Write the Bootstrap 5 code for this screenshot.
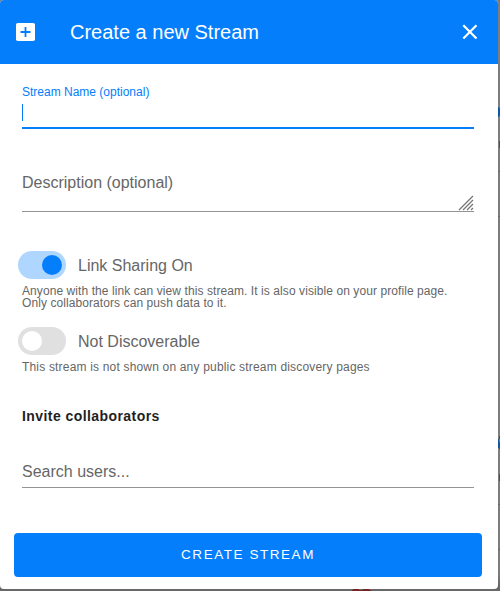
<!DOCTYPE html>
<html lang="en">
<head>
<meta charset="utf-8">
<meta name="viewport" content="width=device-width, initial-scale=1">
<title>Create a new Stream</title>
<link href="https://cdn.jsdelivr.net/npm/bootstrap@5.3.0/dist/css/bootstrap.min.css" rel="stylesheet">
<style>
:root{--blue:#047efb;--ink:#666}
body{font-family:"Liberation Sans",Arial,sans-serif;background:linear-gradient(#7d7d7d 97%,#686868 99%);color:var(--ink);height:591px;overflow:hidden;line-height:1}
.dialog{width:498px;height:589px;border-radius:4px}
.dialog-head{height:64px;background:var(--blue);padding:0 18px 0 13px}
.dialog-title{font-size:20px;margin-left:32px;line-height:24px}
.dialog-body{padding:0 24px 0 22px}
.name-field{height:65px;padding-top:22px;border-bottom:2px solid var(--blue)}
.name-field label{font-size:12px;line-height:12px;color:var(--blue)}
.caret{width:1px;height:17px;background:var(--blue);margin-top:6px}
.line-field{font-size:16px;border-bottom:1px solid #949494}
.desc-field{height:83px;padding-bottom:20px;margin-bottom:39px}
.search-field{height:64px;padding-bottom:7px}
.grip{right:0;bottom:0}
.toggle-row{height:28px;margin-left:-4px;font-size:16px}
.toggle-label{padding-top:2px}
.track{width:48px;height:28px;border-radius:14px;background:#e0e0e0;padding:0 4px;margin-right:12px}
.track.on{background:#afd6fe}
.knob{width:20px;height:20px;border-radius:50%;background:#fff}
.on .knob{background:var(--blue)}
.hint{font-size:12px;line-height:12px;letter-spacing:.18px;margin:6px 0 0}
.hint span{display:block;white-space:nowrap;letter-spacing:.08px}
.hint + .toggle-row{margin-top:18px}
.invite{font-size:14px;letter-spacing:.43px;color:#1f1f1f;line-height:16px;margin-top:35px}
.create{height:44px;margin:45px 16px 0 14px;background:var(--blue);border-radius:4px;font-size:13.5px;letter-spacing:1.55px;--bs-btn-hover-bg:#047efb}
.page-edge{left:0;top:0}
</style>
</head>
<body>
<svg class="page-edge position-absolute" width="500" height="591" viewBox="0 0 500 591">
  <path d="M498 171h2v1h-2zM498 216h2v1h-2zM498 504h2v1h-2zM498 549h2v1h-2z" fill="#686868"/>
  <path d="M498 107h1v1h1v8h-1v1h-1zM499 436h1v3h-1zM498 439h1v9h-1zM499 442h1v7h-1z" fill="#1755a0"/>
  <path d="M499 141h1v7h-1zM499 474h1v7h-1z" fill="#70452f"/>
  <path d="M353 589h6v1h4v-1h6v1h2v1h-19v-1h1z" fill="#782424"/>
</svg>
<main class="dialog bg-white d-flex flex-column overflow-hidden position-relative">
  <header class="dialog-head d-flex align-items-center text-white">
    <svg width="25" height="24" viewBox="0 0 25 24"><rect x="3" y="3" width="19" height="18" rx="1.8" fill="#fff"/><path d="M12.5 7v10M7.5 12h10" stroke="#047efb" stroke-width="1.8"/></svg>
    <h1 class="dialog-title fw-normal mb-0">Create a new Stream</h1>
    <svg class="ms-auto" width="20" height="20" viewBox="0 0 20 20" stroke="currentColor" stroke-width="2.2" fill="none"><path d="M3.3 3.3l13.2 13.2M16.5 3.3L3.3 16.5"/></svg>
  </header>
  <div class="dialog-body">
    <div class="name-field"><label class="d-block">Stream Name (optional)</label><div class="caret"></div></div>
    <div class="line-field desc-field d-flex align-items-end position-relative">Description (optional)
      <svg class="grip position-absolute" width="16" height="16" viewBox="0 0 16 16" stroke="#777" stroke-width="1.3"><path d="M1 15L15 1M5 15L15 5M9 15L15 9M13 15L15 13"/></svg>
    </div>
    <div class="toggle-row d-flex align-items-center"><span class="track on d-flex align-items-center justify-content-end"><span class="knob"></span></span><span class="toggle-label">Link Sharing On</span></div>
    <p class="hint"><span>Anyone with the link can view this stream. It is also visible on your profile page.</span><span>Only collaborators can push data to it.</span></p>
    <div class="toggle-row d-flex align-items-center"><span class="track d-flex align-items-center"><span class="knob"></span></span><span class="toggle-label">Not Discoverable</span></div>
    <p class="hint">This stream is not shown on any public stream discovery pages</p>
    <h2 class="invite fw-bold mb-0">Invite collaborators</h2>
    <div class="line-field search-field d-flex align-items-end">Search users...</div>
  </div>
  <button class="create btn btn-primary border-0 p-0" type="button">CREATE STREAM</button>
</main>
<script src="https://cdn.jsdelivr.net/npm/bootstrap@5.3.0/dist/js/bootstrap.bundle.min.js"></script>
</body>
</html>
